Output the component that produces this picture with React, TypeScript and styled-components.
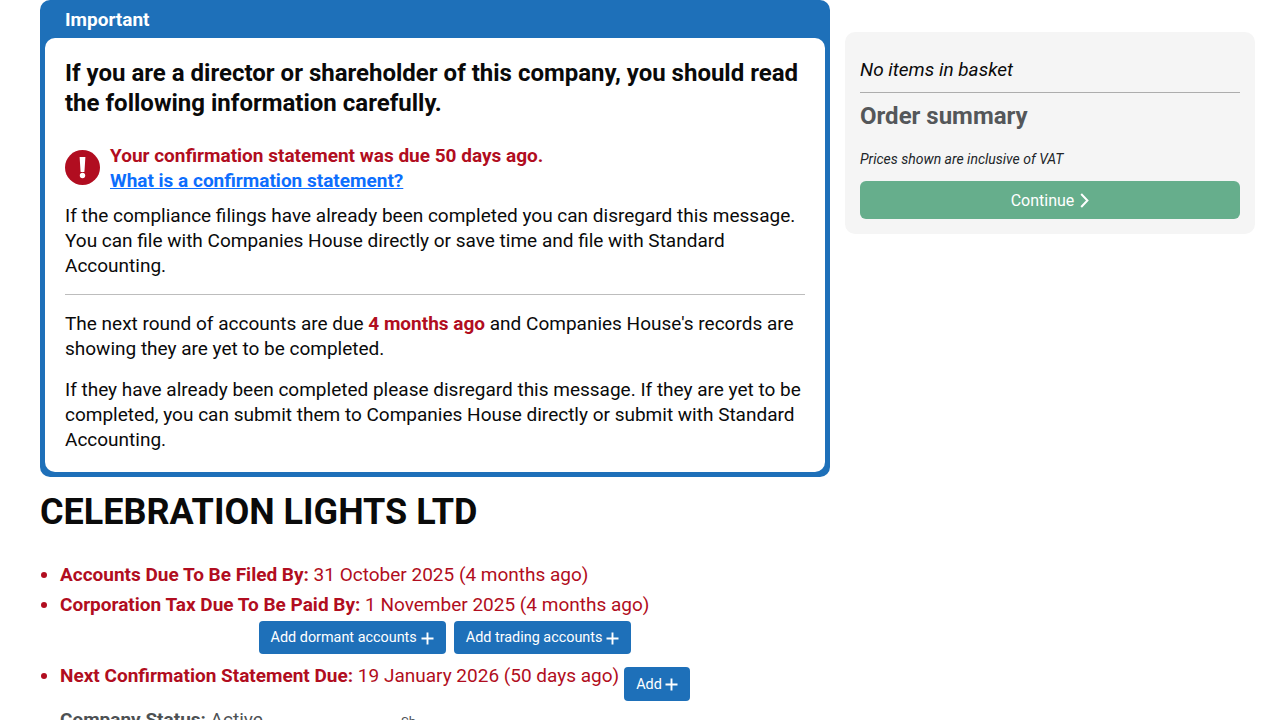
import React from 'react';
import styled, { createGlobalStyle } from 'styled-components';

const GlobalStyle = createGlobalStyle`
    html, body {
        margin: 0;
        height: 720px;
        overflow: hidden;
        background: #fff;
        font-family: Roboto, "Liberation Sans", sans-serif;
        color: #0a0a0a;
    }
`;

const Page = styled.div`
    display: grid;
    grid-template-columns: 790px 410px;
    column-gap: 15px;
    align-items: start;
    padding-left: 40px;
    height: 720px;
    overflow: hidden;
`;

const Main = styled.main`
    display: flex;
    flex-direction: column;
`;

const Notice = styled.section`
    background: #1e70b9;
    border-radius: 10px;
    padding: 0 5px 5px;
`;

const NoticeTitle = styled.div`
    height: 38px;
    padding-left: 20px;
    line-height: 40px;
    font-size: 19px;
    font-weight: 700;
    color: #fff;
`;

const NoticeBody = styled.div`
    background: #fff;
    border-radius: 10px;
    padding: 20px;
`;

const Lead = styled.h3`
    margin: 0 0 25px;
    font-size: 24px;
    line-height: 30px;
    font-weight: 700;
`;

const Alert = styled.div`
    display: flex;
    align-items: flex-start;
    gap: 10px;
    margin-bottom: 10px;
`;

const AlertText = styled.div`
    font-size: 19px;
    line-height: 25px;
    font-weight: 700;
    color: #b10d20;
`;

const HelpLink = styled.a`
    display: block;
    color: #0d6efd;
    text-decoration: underline;
`;

const Para = styled.p`
    margin: 0 0 16px;
    font-size: 19px;
    line-height: 25px;

    &:last-child {
        margin-bottom: 0;
    }
`;

const Due = styled.strong`
    color: #b10d20;
`;

const Rule = styled.hr`
    margin: 16px 0;
    border: 0;
    border-top: 1px solid #bdbdbd;
`;

const CompanyName = styled.h1`
    margin: 14px 0 26px;
    font-size: 36px;
    line-height: 43px;
    font-weight: 700;
`;

const Facts = styled.ul`
    margin: 0;
    padding: 0 0 0 20px;
    list-style: disc;
`;

const Fact = styled.li<{ $urgent?: boolean }>`
    font-size: 19px;
    line-height: 30px;
    color: ${(p) => (p.$urgent ? '#b10d20' : '#4d5154')};

    &::marker {
        color: #b10d20;
    }
`;

const FactRow = styled.div`
    display: flex;
    align-items: flex-start;
    gap: 5px;
`;

const Actions = styled.div`
    display: flex;
    justify-content: center;
    gap: 8px;
    margin: 1px 0 7px;
`;

const ActionButton = styled.button`
    display: inline-flex;
    align-items: center;
    gap: 4px;
    height: 33px;
    padding: 0 12px;
    border: 0;
    border-radius: 4px;
    background: #1e70b9;
    color: #fff;
    font-family: inherit;
    font-size: 14.4px;
`;

const AddButton = styled(ActionButton)`
    gap: 3px;
    height: 34px;
    margin-top: 6px;
`;

const LowerGrid = styled.div`
    display: grid;
    grid-template-columns: 341px 1fr;
    margin-top: 4px;
    padding-left: 20px;
`;

const Status = styled.div`
    font-size: 19px;
    line-height: 30px;
    color: #4d5154;
`;

const SideNote = styled.div`
    margin-top: 2px;
    font-size: 13px;
    line-height: 30px;
    color: #4d5154;
`;

const Basket = styled.aside`
    margin-top: 32px;
    padding: 15px;
    background: #f5f5f5;
    border-radius: 10px;
`;

const Empty = styled.div`
    padding: 10px 0;
    font-size: 19px;
    line-height: 25px;
    font-style: italic;
    border-bottom: 1px solid #adadad;
`;

const SummaryTitle = styled.h4`
    margin: 8px 0 20px;
    font-size: 24px;
    line-height: 30px;
    font-weight: 700;
    color: #54575a;
`;

const VatNote = styled.div`
    font-size: 14px;
    line-height: 17px;
    font-style: italic;
    color: #212529;
    margin-bottom: 13px;
`;

const ContinueButton = styled.button`
    display: flex;
    align-items: center;
    justify-content: center;
    gap: 6px;
    width: 100%;
    height: 38px;
    border: 0;
    border-radius: 6px;
    background: #66ae8c;
    color: #fff;
    font-family: inherit;
    font-size: 16px;
`;

const AlertSvg = styled.svg`
    flex: none;
    margin-top: 7px;
`;

const PlusSvg = styled.svg`
    margin-top: 1px;
`;

const ChevronSvg = styled.svg`
    margin-top: 1px;
`;

const AlertIcon = () => (
    <AlertSvg width="35" height="35" viewBox="0 0 35 35">
        <circle cx="17.5" cy="17.5" r="17.5" fill="#b10d20" />
        <path d="M14.6 7h5.8l-1 15h-3.8z" fill="#fff" />
        <circle cx="17.5" cy="25.5" r="2.7" fill="#fff" />
    </AlertSvg>
);

const PlusIcon = () => (
    <PlusSvg width="13" height="13" viewBox="0 0 13 13">
        <path d="M6.5 0.5v12M0.5 6.5h12" stroke="#fff" strokeWidth="1.9" fill="none" />
    </PlusSvg>
);

const ChevronIcon = () => (
    <ChevronSvg width="9" height="15" viewBox="0 0 9 15">
        <path d="M1.2 1l6.2 6.5-6.2 6.5" stroke="#fff" strokeWidth="2" fill="none" />
    </ChevronSvg>
);

export default function App() {
    return (
        <>
            <GlobalStyle />
            <Page>
                <Main>
                    <Notice>
                        <NoticeTitle>Important</NoticeTitle>
                        <NoticeBody>
                            <Lead>If you are a director or shareholder of this company, you should read the following information carefully.</Lead>
                            <Alert>
                                <AlertIcon />
                                <AlertText>
                                    Your confirmation statement was due 50 days ago.
                                    <HelpLink href="#">What is a confirmation statement?</HelpLink>
                                </AlertText>
                            </Alert>
                            <Para>If the compliance filings have already been completed you can disregard this message. You can file with Companies House directly or save time and file with Standard Accounting.</Para>
                            <Rule />
                            <Para>The next round of accounts are due <Due>4 months ago</Due> and Companies House's records are showing they are yet to be completed.</Para>
                            <Para>If they have already been completed please disregard this message. If they are yet to be completed, you can submit them to Companies House directly or submit with Standard Accounting.</Para>
                        </NoticeBody>
                    </Notice>
                    <CompanyName>CELEBRATION LIGHTS LTD</CompanyName>
                    <Facts>
                        <Fact $urgent><strong>Accounts Due To Be Filed By:</strong> 31 October 2025 (4 months ago)</Fact>
                        <Fact $urgent><strong>Corporation Tax Due To Be Paid By:</strong> 1 November 2025 (4 months ago)</Fact>
                        <Actions>
                            <ActionButton>Add dormant accounts <PlusIcon /></ActionButton>
                            <ActionButton>Add trading accounts <PlusIcon /></ActionButton>
                        </Actions>
                        <Fact $urgent>
                            <FactRow>
                                <span><strong>Next Confirmation Statement Due:</strong> 19 January 2026 (50 days ago)</span>
                                <AddButton>Add <PlusIcon /></AddButton>
                            </FactRow>
                        </Fact>
                    </Facts>
                    <LowerGrid>
                        <Status><strong>Company Status:</strong> Active</Status>
                        <SideNote>Sh</SideNote>
                    </LowerGrid>
                </Main>
                <Basket>
                    <Empty>No items in basket</Empty>
                    <SummaryTitle>Order summary</SummaryTitle>
                    <VatNote>Prices shown are inclusive of VAT</VatNote>
                    <ContinueButton>Continue <ChevronIcon /></ContinueButton>
                </Basket>
            </Page>
        </>
    );
}
